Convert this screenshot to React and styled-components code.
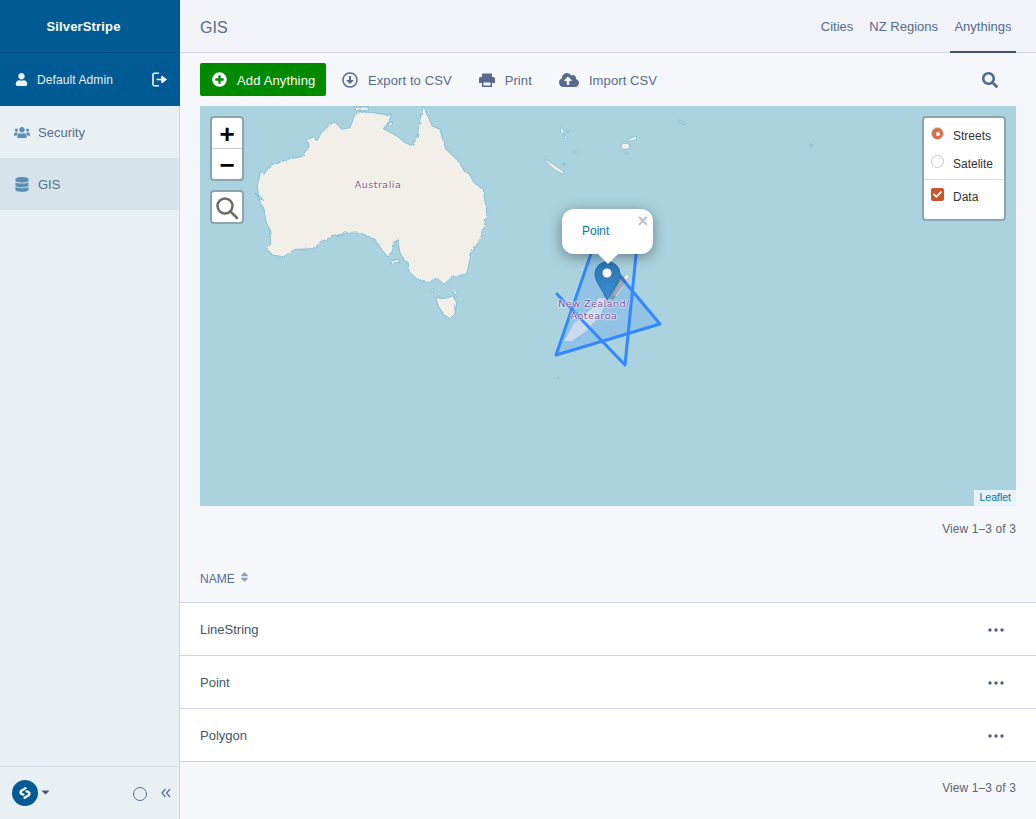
import React from 'react';
import styled, { createGlobalStyle } from 'styled-components';
import {
  FaUser,
  FaUsers,
  FaDatabase,
  FaPlusCircle,
  FaRegArrowAltCircleDown,
  FaCloudUploadAlt,
  FaSearch,
  FaSort,
  FaCaretDown,
  FaCheck,
} from 'react-icons/fa';

const australia =
  'M550 0L556 10L566 35L575 60L600 68L608 100L618 130L655 165L672 195L690 205L700 228L730 250L735 285L742 320L730 375L718 405L695 440L680 505L640 510L612 535L590 515L570 530L530 518L505 495L505 470L490 460L480 440L472 398L465 410L455 440L440 450L425 430L405 400L365 382L320 380L270 395L240 408L225 428L165 430L130 452L100 448L80 430L92 415L90 375L78 345L70 310L55 270L52 240L62 195L72 205L90 178L150 158L185 152L205 125L205 100L220 92L230 105L245 80L270 55L285 48L305 70L330 65L345 25L370 18L400 20L430 25L455 25L445 50L430 68L470 90L495 110L515 118L530 100L540 40Z';
const tasmania = 'M587 575L610 578L640 570L650 590L645 625L630 638L610 625L595 600Z';

const rows = ['LineString', 'Point', 'Polygon'];

const GlobalStyle = createGlobalStyle`
  html, body {
    margin: 0;
    height: 100%;
  }
  body {
    font-family: "Liberation Sans", Arial, sans-serif;
    background: #f6f7fa;
    color: #43536d;
    overflow: hidden;
  }
`;

const Page = styled.div`
  display: flex;
  height: 819px;
`;

const Sidebar = styled.aside`
  width: 180px;
  flex: none;
  display: flex;
  flex-direction: column;
  background: #e9f0f4;
  border-right: 1px solid #ced5e1;
  box-sizing: border-box;
`;

const SidebarTop = styled.div`
  background: #005a93;
  color: #fff;
  margin-right: -1px;
`;

const Brand = styled.div`
  height: 53px;
  box-sizing: border-box;
  display: flex;
  align-items: center;
  justify-content: center;
  padding-right: 13px;
  font-size: 13px;
  font-weight: bold;
  letter-spacing: 0.15px;
  border-bottom: 1px solid #004e81;
`;

const UserRow = styled.div`
  height: 53px;
  display: flex;
  align-items: center;
  padding: 0 13px 0 15px;
  font-size: 12px;
  letter-spacing: 0.1px;
  color: #e8f1f7;
`;

const UserName = styled.span`
  flex: 1;
  margin-left: 9px;
`;

const NavItem = styled.div`
  height: 52px;
  display: flex;
  align-items: center;
  gap: 8px;
  padding-left: 14px;
  font-size: 13px;
  color: #566b8d;
  background: ${(p) => (p.$active ? '#d6e3ea' : 'transparent')};
  svg {
    width: 16px;
    height: 15px;
    color: #5b8fb3;
  }
`;

const SidebarFoot = styled.div`
  margin-top: auto;
  height: 53px;
  display: flex;
  align-items: center;
  padding: 0 8px 0 12px;
  border-top: 1px solid #d5dfe7;
  color: #566b8d;
  box-sizing: border-box;
`;

const Caret = styled(FaCaretDown)`
  width: 13px;
  height: 12px;
  margin: 0 0 2px 1px;
  color: #4a5468;
`;

const Ring = styled.span`
  width: 14px;
  height: 14px;
  margin: 2px 14px 0 auto;
  border: 1px solid #566b8d;
  border-radius: 50%;
  box-sizing: border-box;
`;

const Main = styled.main`
  flex: 1;
  min-width: 0;
  display: flex;
  flex-direction: column;
`;

const Header = styled.header`
  height: 53px;
  box-sizing: border-box;
  flex: none;
  display: flex;
  align-items: center;
  padding: 0 20px;
  background: #f1f3f8;
  border-bottom: 1px solid #ced5e1;
`;

const Title = styled.h1`
  flex: 1;
  margin: 3px 0 0;
  font-size: 16px;
  font-weight: normal;
  color: #566b8d;
`;

const Tabs = styled.nav`
  display: flex;
  align-self: stretch;
`;

const Tab = styled.a`
  display: flex;
  align-items: center;
  justify-content: center;
  box-sizing: border-box;
  margin-left: ${(p) => (p.$active ? '12px' : '16px')};
  margin-bottom: -1px;
  padding-top: 2px;
  width: ${(p) => (p.$active ? '66px' : 'auto')};
  font-size: 13px;
  color: #566b8d;
  border-bottom: 2px solid ${(p) => (p.$active ? '#43536d' : 'transparent')};
`;

const Toolbar = styled.div`
  height: 53px;
  flex: none;
  display: flex;
  align-items: center;
  padding: 0 20px;
  box-sizing: border-box;
`;

const AddButton = styled.button`
  width: 126px;
  height: 33px;
  margin-top: -1px;
  display: flex;
  align-items: center;
  gap: 10px;
  padding: 2px 0 0 12px;
  border: 0;
  border-radius: 2px;
  background: #008a00;
  color: #fff;
  font: 13px "Liberation Sans", Arial, sans-serif;
  letter-spacing: 0.15px;
  svg {
    width: 15px;
    height: 15px;
    margin-top: -2px;
  }
`;

const ToolLink = styled.a`
  display: flex;
  align-items: center;
  margin-top: 1px;
  margin-left: ${(p) => p.$left}px;
  gap: ${(p) => p.$gap}px;
  font-size: 13px;
  letter-spacing: 0.1px;
  color: #566b8d;
  svg {
    width: ${(p) => p.$icon}px;
    height: 16px;
  }
`;

const SearchLink = styled.a`
  margin: 1px 18px 0 auto;
  color: #4f6a93;
  display: flex;
  svg {
    width: 16px;
    height: 16px;
  }
`;

const MapBox = styled.div`
  position: relative;
  flex: none;
  width: 816px;
  height: 400px;
  margin: 0 20px;
  background: #aad3df;
  overflow: hidden;
`;

const MapArt = styled.svg`
  position: absolute;
  inset: 0;
  width: 816px;
  height: 400px;
`;

const PlaceLabel = styled.span`
  position: absolute;
  left: ${(p) => p.$x}px;
  top: ${(p) => p.$y}px;
  transform: translateX(-50%);
  font: 9.5px/12px "DejaVu Sans", sans-serif;
  letter-spacing: 0.5px;
  text-align: center;
  white-space: nowrap;
  color: ${(p) => p.$color};
  text-shadow: 0 0 2px #fff, 0 0 2px #fff, 0 0 2px #fff;
`;

const ControlBox = styled.div`
  position: absolute;
  left: 10px;
  top: ${(p) => p.$top}px;
  width: 34px;
  box-sizing: border-box;
  border: 2px solid #8aa5ae;
  border-radius: 4px;
  background: #fff;
`;

const ZoomButton = styled.div`
  height: 30px;
  display: flex;
  align-items: center;
  justify-content: center;
  padding-top: 1px;
  box-sizing: border-box;
  font: bold 26px/30px "Liberation Sans", Arial, sans-serif;
  color: #000;
  & + & {
    height: 31px;
    border-top: 1px solid #ccc;
  }
`;

const LayerBox = styled.div`
  position: absolute;
  right: 10px;
  top: 10px;
  width: 84px;
  height: 105px;
  box-sizing: border-box;
  border: 2px solid #8aa5ae;
  border-radius: 4px;
  background: #fff;
  font-size: 12px;
  color: #333;
`;

const LayerRow = styled.div`
  height: 28px;
  display: flex;
  align-items: center;
  gap: 9px;
  padding-left: 7px;
  margin-top: ${(p) => (p.$first ? '4px' : '0')};
`;

const Radio = styled.span`
  width: 13px;
  height: 13px;
  margin-top: -5px;
  border-radius: 50%;
  box-sizing: border-box;
  flex: none;
  display: flex;
  align-items: center;
  justify-content: center;
  background: ${(p) => (p.$on ? '#dd6e42' : '#fff')};
  border: 1px solid ${(p) => (p.$on ? '#cfcfcf' : '#c8c8c8')};
  &::after {
    content: '';
    width: 4px;
    height: 4px;
    border-radius: 50%;
    background: ${(p) => (p.$on ? '#fff' : 'transparent')};
  }
`;

const Check = styled.span`
  width: 13px;
  height: 13px;
  margin-top: -5px;
  border-radius: 2px;
  flex: none;
  display: flex;
  align-items: center;
  justify-content: center;
  background: #c8552e;
  color: #fff;
  svg {
    width: 9px;
    height: 9px;
  }
`;

const LayerDivider = styled.hr`
  margin: 1px 0 3px;
  border: 0;
  border-top: 1px solid #ddd;
`;

const Popup = styled.div`
  position: absolute;
  left: 362px;
  top: 103px;
  width: 91px;
  height: 45px;
  box-sizing: border-box;
  padding: 15px 0 0 20px;
  border-radius: 12px;
  background: #fff;
  color: #0078a8;
  font-size: 12px;
  box-shadow: 0 3px 14px rgba(0, 0, 0, 0.4);
  &::after {
    content: '';
    position: absolute;
    left: 35px;
    top: 44px;
    border: 11px solid transparent;
    border-top-color: #fff;
    border-bottom: 0;
  }
`;

const PopupClose = styled.span`
  position: absolute;
  right: 5px;
  top: 3px;
  font: bold 18px/18px Tahoma, "Liberation Sans", sans-serif;
  color: #c3c3c3;
`;

const Attribution = styled.div`
  position: absolute;
  right: 0;
  bottom: 0;
  height: 16px;
  padding: 0 5px;
  background: rgba(255, 255, 255, 0.7);
  color: #0078a8;
  font-size: 10.5px;
  line-height: 15px;
`;

const Pagination = styled.div`
  height: ${(p) => p.$height}px;
  flex: none;
  padding: ${(p) => p.$top}px 20px 0 0;
  box-sizing: border-box;
  text-align: right;
  font-size: 12px;
  letter-spacing: 0.1px;
  color: #5b6478;
`;

const TableHead = styled.div`
  height: 53px;
  flex: none;
  display: flex;
  align-items: center;
  gap: 5px;
  padding: 6px 20px 0;
  box-sizing: border-box;
  font-size: 12px;
  color: #566b8d;
  border-bottom: 1px solid #ced5e1;
  svg {
    width: 9px;
    height: 12px;
    margin-top: -4px;
    color: #8d9dbb;
  }
`;

const Row = styled.div`
  height: 53px;
  flex: none;
  display: flex;
  align-items: center;
  justify-content: space-between;
  padding: 0 32px 0 20px;
  box-sizing: border-box;
  background: #fff;
  font-size: 13px;
  color: #43536d;
  border-bottom: 1px solid #ced5e1;
  svg {
    margin-top: 2px;
  }
`;

const Dots = () => (
  <svg width="16" height="6" viewBox="0 0 16 6" fill="#4f5f80">
    <circle cx="2" cy="3" r="1.7" />
    <circle cx="8" cy="3" r="1.7" />
    <circle cx="14" cy="3" r="1.7" />
  </svg>
);

const LogoutIcon = () => (
  <svg width="15" height="15" viewBox="0 0 15 15" fill="none" stroke="#fff" strokeWidth="1.5">
    <path d="M7 1.2H2.4Q1 1.2 1 2.6V12.4Q1 13.8 2.4 13.8H7" />
    <path d="M4.5 7.5H10V4.6L14 7.5L10 10.4V7.5" fill="#fff" strokeLinejoin="round" />
  </svg>
);

const Logo = () => (
  <svg width="26" height="26" viewBox="0 0 26 26">
    <circle cx="13" cy="13" r="13" fill="#005a93" />
    <g fill="none" stroke="#fff" strokeWidth="2.4" strokeLinecap="round" strokeLinejoin="round">
      <path d="M13.4 8.2L9 11Q8 13 9.4 13.8L11.4 14.6" />
      <path d="M12.6 17.8L17 15Q18 13 16.6 12.2L14.6 11.4" />
    </g>
  </svg>
);

const DoubleChevron = () => (
  <svg width="10" height="10" viewBox="0 0 10 10" fill="none" stroke="#566b8d" strokeWidth="1.2">
    <path d="M4.5 1L1 5L4.5 9" />
    <path d="M9 1L5.5 5L9 9" />
  </svg>
);

const PrintIcon = () => (
  <svg width="16" height="16" viewBox="0 0 16 16" fill="#566b8d">
    <path d="M3 1.5H13V5H3Z" />
    <path d="M1.5 5H14.5Q16 5 16 6.5V11H13V9H3V11H0V6.5Q0 5 1.5 5Z" />
    <path d="M3 9H13V15H3ZM4.5 10.5V13.5H11.5V10.5Z" fillRule="evenodd" />
  </svg>
);

const MapDrawing = () => (
  <MapArt viewBox="0 0 816 400">
    <defs>
      <filter id="coast" x="-5%" y="-5%" width="110%" height="110%">
        <feTurbulence type="fractalNoise" baseFrequency="0.06" numOctaves="3" seed="4" />
        <feDisplacementMap in="SourceGraphic" scale="10" />
      </filter>
      <linearGradient id="pin" x1="0" y1="0" x2="0" y2="1">
        <stop offset="0" stopColor="#2b75ad" />
        <stop offset="1" stopColor="#3a8fd8" />
      </linearGradient>
    </defs>
    <g transform="translate(40 0) scale(0.3333)" fill="#f2efe9" stroke="#82bfd4" strokeWidth="3" filter="url(#coast)">
      <path d={australia} />
      <path d={tasmania} />
      <path d="M450 465L478 460L478 470L452 472Z" />
      <path d="M575 548L581 550L578 560L573 558Z" />
      <path d="M640 552L650 556L652 568L642 566Z" />
      <path d="M345 5L385 2L380 14L348 15Z" />
      <path d="M445 50L458 48L456 58L446 58Z" />
      <path d="M44 262L60 270L68 282L54 274Z" fill="none" />
    </g>
    <g transform="translate(330 0) scale(0.3333)" fill="#f2efe9" stroke="#82bfd4" strokeWidth="2.5">
      <path d="M46 160L70 175L102 198L98 205L72 190L46 166Z" />
      <path d="M92 64L102 72L102 84L92 80Z" />
      <path d="M100 86L114 94L106 100Z" />
      <circle cx="113" cy="76" r="4" fill="none" />
      <circle cx="135" cy="138" r="4" fill="none" />
      <circle cx="102" cy="176" r="4" fill="none" />
      <ellipse cx="286" cy="121" rx="13" ry="9" />
      <path d="M295 100L318 90L320 100L298 106Z" />
      <ellipse cx="290" cy="142" rx="5" ry="3" fill="none" />
      <path d="M446 42L456 44L466 52L460 56L448 50Z" fill="none" />
      <circle cx="843" cy="117" r="4" fill="none" />
    </g>
    <g transform="translate(330 94) scale(0.3333)" fill="#f2efe9" stroke="#82bfd4" strokeWidth="2">
      <path d="M100 425L130 370L190 320L205 292L235 295L215 340L170 395L125 425Z" />
      <path d="M290 222L298 228L285 255L262 290L245 290L262 255L278 235Z" />
      <circle cx="84" cy="535" r="3" fill="none" />
    </g>
    <g fill="rgba(51,136,255,0.2)" stroke="#3388ff" strokeWidth="3" strokeLinejoin="round" strokeLinecap="round">
      <path d="M356 249L460 218L394 139Z" />
      <path d="M357 188L425 259L440 109" fill="none" />
    </g>
    <path d="M420 167L403 190L413 194L427 174Z" fill="rgba(60,60,60,0.3)" />
    <path
      d="M407 194C403 184 395 176 395 168A12.5 12.5 0 0 1 420 168C420 176 412 184 407 194Z"
      fill="url(#pin)"
      stroke="#2a6ea5"
    />
    <circle cx="407" cy="167" r="4.5" fill="#fff" />
  </MapArt>
);

const App = () => (
  <Page>
    <GlobalStyle />
    <Sidebar>
      <SidebarTop>
        <Brand>SilverStripe</Brand>
        <UserRow>
          <FaUser size={13} />
          <UserName>Default Admin</UserName>
          <LogoutIcon />
        </UserRow>
      </SidebarTop>
      <NavItem>
        <FaUsers />
        Security
      </NavItem>
      <NavItem $active>
        <FaDatabase />
        GIS
      </NavItem>
      <SidebarFoot>
        <Logo />
        <Caret />
        <Ring />
        <DoubleChevron />
      </SidebarFoot>
    </Sidebar>
    <Main>
      <Header>
        <Title>GIS</Title>
        <Tabs>
          <Tab>Cities</Tab>
          <Tab>NZ Regions</Tab>
          <Tab $active>Anythings</Tab>
        </Tabs>
      </Header>
      <Toolbar>
        <AddButton>
          <FaPlusCircle />
          Add Anything
        </AddButton>
        <ToolLink $left={16} $gap={10} $icon={16}>
          <FaRegArrowAltCircleDown />
          Export to CSV
        </ToolLink>
        <ToolLink $left={27} $gap={10} $icon={16}>
          <PrintIcon />
          Print
        </ToolLink>
        <ToolLink $left={27} $gap={10} $icon={20}>
          <FaCloudUploadAlt />
          Import CSV
        </ToolLink>
        <SearchLink>
          <FaSearch />
        </SearchLink>
      </Toolbar>
      <MapBox>
        <MapDrawing />
        <PlaceLabel $x={178} $y={73} $color="#85558f">Australia</PlaceLabel>
        <PlaceLabel $x={394} $y={192} $color="#6c4a96">
          New Zealand/
          <br />
          Aotearoa
        </PlaceLabel>
        <ControlBox $top={10}>
          <ZoomButton>+</ZoomButton>
          <ZoomButton>−</ZoomButton>
        </ControlBox>
        <ControlBox $top={84}>
          <ZoomButton>
            <svg width="24" height="24" viewBox="0 0 24 24" fill="none" stroke="#6d6d63" strokeWidth="2.5">
              <circle cx="10" cy="10" r="7.5" />
              <path d="M15.5 15.5L22 22" strokeLinecap="round" />
            </svg>
          </ZoomButton>
        </ControlBox>
        <LayerBox>
          <LayerRow $first>
            <Radio $on />
            Streets
          </LayerRow>
          <LayerRow>
            <Radio />
            Satelite
          </LayerRow>
          <LayerDivider />
          <LayerRow>
            <Check>
              <FaCheck />
            </Check>
            Data
          </LayerRow>
        </LayerBox>
        <Popup>
          Point
          <PopupClose>×</PopupClose>
        </Popup>
        <Attribution>Leaflet</Attribution>
      </MapBox>
      <Pagination $height={44} $top={16}>View 1–3 of 3</Pagination>
      <TableHead>
        NAME
        <FaSort />
      </TableHead>
      {rows.map((name) => (
        <Row key={name}>
          {name}
          <Dots />
        </Row>
      ))}
      <Pagination $height={57} $top={19}>View 1–3 of 3</Pagination>
    </Main>
  </Page>
);

export default App;
